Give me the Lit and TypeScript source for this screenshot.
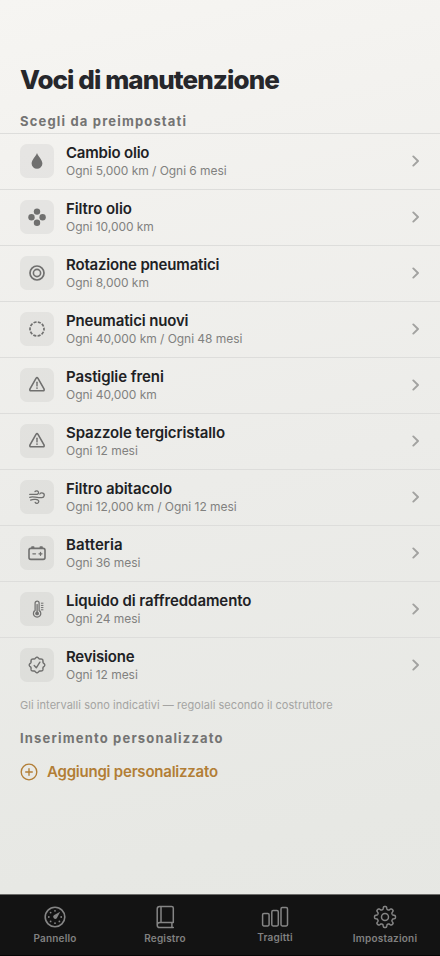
import { LitElement, html, css, svg } from "lit";
import { customElement, property } from "lit/decorators.js";

/** Closed outline whose radius varies with the angle; used for the gear and the seal. */
function radial(cx: number, cy: number, radius: (a: number) => number): string {
  const points: string[] = [];
  for (let i = 0; i < 160; i++) {
    const a = (i / 160) * Math.PI * 2;
    const r = radius(a);
    points.push(`${(cx + r * Math.sin(a)).toFixed(2)} ${(cy - r * Math.cos(a)).toFixed(2)}`);
  }
  return `M${points.join("L")}Z`;
}

const gearPath = radial(12, 12, (a) => 9.1 + 1.4 * Math.tanh(2.2 * Math.cos(8 * a)));
const sealPath = radial(10, 10, (a) => 7.15 + 0.6 * Math.cos(8 * a));
const dialDots = [0, 90, 135, 180, 225, 270, 315].map((d) => {
  const a = (d * Math.PI) / 180;
  return [12 + 6.2 * Math.sin(a), 12 - 6.2 * Math.cos(a)];
});

const warning = svg`
  <path d="M9 3.4Q10 1.9 11 3.4L17 13.8Q17.7 15.7 15.9 15.8H4.1Q2.3 15.7 3 13.8Z" stroke-width="1.6"/>
  <path d="M10 7.2V10.9" stroke-width="1.4"/><circle class="fill" cx="10" cy="13.1" r=".85"/>`;

const icons: Record<string, unknown> = {
  drop: svg`<path class="fill" d="M10 1.9C11 4.9 15.4 8.7 15.4 12.6A5.4 5.2 0 0 1 4.6 12.6C4.6 8.7 9 4.9 10 1.9Z"/>`,
  filter: svg`<circle class="fill" cx="10" cy="4.6" r="3.2"/><circle class="fill" cx="4.5" cy="10.2" r="3.2"/>
    <circle class="fill" cx="15.6" cy="10.2" r="3.2"/><circle class="fill" cx="10" cy="15.8" r="3.2"/>`,
  rings: svg`<circle cx="10" cy="10" r="7" stroke-width="1.7"/><circle cx="10" cy="10" r="3.6" stroke-width="1.6"/>`,
  dashed: svg`<circle cx="10" cy="10" r="7" stroke-width="1.7" stroke-linecap="butt" stroke-dasharray="3.1 1.298" stroke-dashoffset="1.55"/>`,
  warning,
  wind: svg`<g stroke-width="1.25">
    <path d="M2.7 7.4H9.8A2 1.8 0 1 0 8 4.5"/>
    <path d="M2.7 10.3C6 9 9 10.9 12.5 10.5H14.6A2.4 2.3 0 1 0 12.8 7"/>
    <path d="M3.6 13.1C6 12 11.8 11.9 11.8 14.6A1.9 1.9 0 0 1 8.2 15.4"/></g>`,
  battery: svg`<rect x="2" y="5.4" width="16" height="11" rx="1.8" stroke-width="1.6"/>
    <path d="M5 4.2H6.6M13.4 4.2H15" stroke-width="1.8"/>
    <path d="M5.9 10.8H8.5M12 10.8H15M13.5 9.3V12.3" stroke-width="1.3"/>`,
  thermo: svg`<path d="M8.1 11.4V4.1A2 2 0 0 1 12.1 4.1V11.4A3.7 3.7 0 1 1 8.1 11.4Z" stroke-width="1.25"/>
    <path d="M10.1 5.6V14" stroke-width="1.3"/><circle class="fill" cx="10.1" cy="14.4" r="1.9"/>
    <path d="M14.3 4.2H16M14.3 6.4H16M14.3 8.6H16M14.3 10.8H16" stroke-width="1"/>`,
  seal: svg`<path d=${sealPath} stroke-width="1.45"/><path d="M7.2 10.5L9.3 12.8L12.9 7.2" stroke-width="1.4"/>`,
};

const tabIcons: Record<string, unknown> = {
  dial: svg`<circle cx="12" cy="12" r="9.8" stroke-width="1.6"/>
    ${dialDots.map(([x, y]) => svg`<circle class="fill" cx=${x} cy=${y} r=".9"/>`)}
    <path class="fill" d="M17.2 6.8L13.8 13.2A2.1 2.1 0 1 1 10.8 10.2Z"/>`,
  book: svg`<path d="M20.3 17.4V3.1Q20.3 1.4 18.6 1.4H6.7Q4.2 1.4 4.2 3.9V20Q4.2 22.6 6.8 22.6H20.3M20.3 17.4H6.8Q4.2 17.4 4.2 20M8 1.6V17.2M18.9 17.6V22.4" stroke-width="1.5"/>`,
  bars: svg`<rect x="-.4" y="8.5" width="6.5" height="12.4" rx="1.3" stroke-width="1.5"/>
    <rect x="8.8" y="5.6" width="6.5" height="15.3" rx="1.3" stroke-width="1.5"/>
    <rect x="18" y="2.6" width="6.5" height="18.3" rx="1.3" stroke-width="1.5"/>`,
  gear: svg`<path d=${gearPath} stroke-width="1.5"/><circle cx="12" cy="12" r="3.5" stroke-width="1.5"/>`,
};

/** Icon, name, interval, and the letter spacing of the name in pixels. */
const presets: [string, string, string, number][] = [
  ["drop", "Cambio olio", "Ogni 5,000 km / Ogni 6 mesi", -0.2],
  ["filter", "Filtro olio", "Ogni 10,000 km", -0.1],
  ["rings", "Rotazione pneumatici", "Ogni 8,000 km", -0.17],
  ["dashed", "Pneumatici nuovi", "Ogni 40,000 km / Ogni 48 mesi", -0.14],
  ["warning", "Pastiglie freni", "Ogni 40,000 km", -0.08],
  ["warning", "Spazzole tergicristallo", "Ogni 12 mesi", -0.1],
  ["wind", "Filtro abitacolo", "Ogni 12,000 km / Ogni 12 mesi", -0.1],
  ["battery", "Batteria", "Ogni 36 mesi", 0.1],
  ["thermo", "Liquido di raffreddamento", "Ogni 24 mesi", -0.08],
  ["seal", "Revisione", "Ogni 12 mesi", -0.22],
];

@customElement("preset-row")
class PresetRow extends LitElement {
  @property() icon = "";
  @property() name = "";
  @property() interval = "";
  @property({ type: Number }) tracking = 0;

  static styles = css`
    :host { display: flex; align-items: center; height: 56px; box-sizing: border-box;
      padding: 0 20px 2px; border-top: 1px solid #dddddb; }
    .tile { width: 34px; height: 34px; border-radius: 7px; background: rgba(60, 60, 58, 0.065);
      display: grid; place-items: center; flex: none; margin-right: 12px; }
    .glyph { width: 20px; height: 20px; fill: none; stroke: #70706f; stroke-linecap: round; stroke-linejoin: round; }
    .fill { fill: #70706f; stroke: none; }
    .text { flex: 1; padding-top: 2px; white-space: nowrap; }
    .name { font-size: 15px; line-height: 18px; font-weight: 600; color: #202124; }
    .interval { font-size: 12px; line-height: 17px; color: #81817f; letter-spacing: -0.04px; }
    .chevron { width: 8px; height: 12px; fill: none; stroke: #a2a2a0; stroke-width: 1.9;
      stroke-linecap: round; stroke-linejoin: round; }
  `;

  render() {
    return html`
      <div class="tile"><svg class="glyph" viewBox="0 0 20 20">${icons[this.icon]}</svg></div>
      <div class="text">
        <div class="name" style="letter-spacing: ${this.tracking}px">${this.name}</div>
        <div class="interval">${this.interval}</div>
      </div>
      <svg class="chevron" viewBox="0 0 8 12"><path d="M1.3 1.4L6 6L1.3 10.6"/></svg>`;
  }
}

@customElement("tab-item")
class TabItem extends LitElement {
  @property() icon = "";
  @property() label = "";

  static styles = css`
    :host { display: flex; flex-direction: column; align-items: center; flex: 1; padding-top: 10px; }
    .glyph { width: 24px; height: 24px; fill: none; stroke: #858585; overflow: visible;
      stroke-linecap: round; stroke-linejoin: round; }
    .fill { fill: #858585; stroke: none; }
    .label { margin-top: 2px; font-size: 10px; line-height: 14px; font-weight: 600; letter-spacing: 0.2px; color: #818181; }
    .raised { margin-top: 1px; }
  `;

  render() {
    return html`
      <svg class="glyph" viewBox="0 0 24 24">${tabIcons[this.icon]}</svg>
      <div class="label ${this.icon === "bars" ? "raised" : ""}">${this.label}</div>`;
  }
}

@customElement("app-root")
class AppRoot extends LitElement {
  static styles = css`
    :host { display: flex; flex-direction: column; width: 100%; height: 956px; overflow: hidden;
      font-family: Inter, "Liberation Sans", sans-serif;
      background: linear-gradient(168deg, #f6f5f2 0%, #f3f2ef 15%, #ecece9 50%, #e7e8e4 85%, #e6e7e3 100%); }
    main { flex: 1; padding-top: 62px; white-space: nowrap; }
    h1 { margin: 0 20px; font-size: 26px; line-height: 36px; font-weight: 800; letter-spacing: -0.93px; color: #26272b; }
    h2 { margin: 0 20px; font-size: 13px; line-height: 18px; font-weight: 700; letter-spacing: 1.17px; color: #747473; }
    .first { margin-top: 14px; margin-bottom: 3px; }
    .note { margin: 4px 20px 0; font-size: 11px; line-height: 16px; color: #a4a4a2; letter-spacing: 0.05px; }
    .second { margin-top: 16px; }
    .add { display: flex; align-items: center; gap: 9px; margin: 14px 20px 0; height: 22px;
      font-size: 15px; font-weight: 600; color: #b27e36; letter-spacing: -0.22px; }
    .add span { line-height: 20px; margin-top: -1px; }
    .plus { width: 18px; height: 18px; fill: none; stroke: #b27e36; stroke-width: 1.35; stroke-linecap: round; }
    nav { display: flex; height: 62px; box-sizing: border-box; background: #131313; border-top: 1px solid #6b6b69;
      border-bottom: 1px solid #050505; }
  `;

  render() {
    return html`
      <main>
        <h1>Voci di manutenzione</h1>
        <h2 class="first">Scegli da preimpostati</h2>
        ${presets.map(
          ([icon, name, interval, tracking]) =>
            html`<preset-row .icon=${icon} .name=${name} .interval=${interval} .tracking=${tracking}></preset-row>`,
        )}
        <div class="note">Gli intervalli sono indicativi — regolali secondo il costruttore</div>
        <h2 class="second">Inserimento personalizzato</h2>
        <div class="add">
          <svg class="plus" viewBox="0 0 18 18"><circle cx="9" cy="9" r="7.8"/><path d="M9 5.7V12.3M5.7 9H12.3"/></svg>
          <span>Aggiungi personalizzato</span>
        </div>
      </main>
      <nav>
        <tab-item icon="dial" label="Pannello"></tab-item>
        <tab-item icon="book" label="Registro"></tab-item>
        <tab-item icon="bars" label="Tragitti"></tab-item>
        <tab-item icon="gear" label="Impostazioni"></tab-item>
      </nav>`;
  }
}
